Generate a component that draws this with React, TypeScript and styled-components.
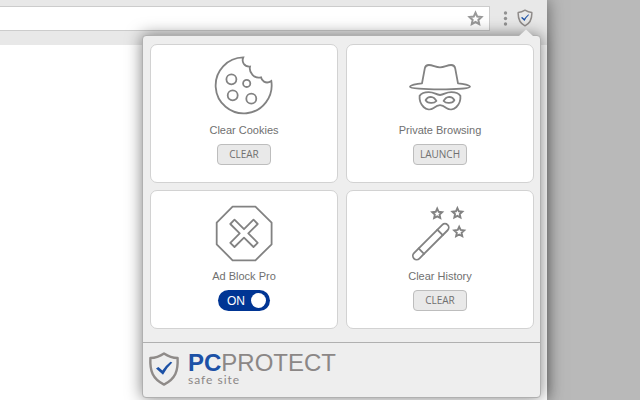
import React, { useState } from "react";
import styled, { createGlobalStyle } from "styled-components";

const GlobalStyle = createGlobalStyle`
  *, *::before, *::after { box-sizing: border-box; }
  body {
    margin: 0;
    background: #b9b9b9;
    font-family: "Liberation Sans", Arial, sans-serif;
    color: #707070;
  }
  button, input { font: inherit; color: inherit; }
`;

const Desktop = styled.div`
  min-height: 100vh;
  display: flex;
  padding-right: 93px;
  overflow: hidden;
`;

const Browser = styled.div`
  position: relative;
  flex: 1;
  background: #fff;
  box-shadow: 0 0 16px rgba(0, 0, 0, 0.5);
`;

const Toolbar = styled.header`
  display: flex;
  align-items: center;
  height: 45px;
  padding: 0 14px 9px 0;
  background: #e8e8e8;
`;

const AddressBar = styled.form`
  flex: 1;
  display: flex;
  align-items: center;
  height: 25px;
  margin-right: 9px;
  padding-right: 5px;
  background: #fff;
  border: solid #ccc;
  border-width: 1px 1px 1px 0;
`;

const AddressInput = styled.input`
  flex: 1;
  min-width: 0;
  border: 0;
  outline: 0;
  padding: 0 8px;
  background: transparent;
  font-size: 12px;
`;

const IconButton = styled.button<{ $gap?: number }>`
  display: flex;
  padding: 0;
  margin-left: ${(p) => p.$gap ?? 0}px;
  border: 0;
  background: transparent;
  cursor: pointer;
`;

const Popup = styled.section`
  position: absolute;
  top: 35px;
  right: 6px;
  width: 399px;
  background: #eee;
  border: 1px solid #b0b0b0;
  border-radius: 4px;
  box-shadow: 0 0 16px rgba(0, 0, 0, 0.5);
`;

const Pointer = styled.svg`
  position: absolute;
  top: -7px;
  right: 7px;
  display: block;
`;

const CardGrid = styled.div`
  display: grid;
  grid-template-columns: 1fr 1fr;
  gap: 7px 8px;
  padding: 8px 6px 13px 7px;
`;

const Card = styled.article`
  display: flex;
  flex-direction: column;
  align-items: center;
  padding: 9px 0 17px;
  background: #fff;
  border: 1px solid #d2d2d2;
  border-radius: 7px;
`;

const Title = styled.h2`
  margin: 4px 0 6px;
  font-size: 11px;
  line-height: 16px;
  font-weight: 400;
`;

const ActionButton = styled.button`
  width: 54px;
  height: 21px;
  padding: 0;
  border: 1px solid #bdbdbd;
  border-radius: 4px;
  background: #e9e9e9;
  font-family: "Open Sans", sans-serif;
  font-size: 10px;
  line-height: 19px;
  cursor: pointer;
`;

const Switch = styled.label<{ $on: boolean }>`
  display: flex;
  flex-direction: ${(p) => (p.$on ? "row" : "row-reverse")};
  align-items: center;
  justify-content: space-between;
  width: 52px;
  height: 21px;
  padding: ${(p) => (p.$on ? "0 4px 0 9px" : "0 9px 0 4px")};
  border-radius: 11px;
  background: ${(p) => (p.$on ? "#003594" : "#8c8c8c")};
  color: #fff;
  font-size: 12px;
  cursor: pointer;
`;

const SwitchInput = styled.input`
  appearance: none;
  width: 15px;
  height: 15px;
  margin: 0;
  border-radius: 50%;
  background: #fff;
  cursor: pointer;
`;

const Footer = styled.footer`
  display: flex;
  align-items: flex-start;
  gap: 8px;
  padding: 8px 5px 10px;
  border-top: 1px solid #b0b0b0;
`;

const Brand = styled.div`
  display: flex;
  flex-direction: column;
`;

const BrandName = styled.span`
  font-size: 24px;
  line-height: 24px;
  color: #8b8786;
`;

const BrandStrong = styled.b`
  color: #1c51a6;
`;

const Tagline = styled.span`
  font-family: Lato, sans-serif;
  font-size: 12px;
  line-height: 9px;
  letter-spacing: 1px;
  color: #8b8786;
`;

const LineArt = styled.svg`
  display: block;
  width: 64px;
  height: 64px;
  fill: none;
  stroke: #828282;
  stroke-width: 1.8;
  stroke-linejoin: round;
  stroke-linecap: round;
`;

const starPoints = (cx: number, cy: number, r: number) =>
  Array.from({ length: 10 }, (_, i) => {
    const a = -Math.PI / 2 + (i * Math.PI) / 5;
    const d = i % 2 ? r * 0.48 : r;
    return `${(cx + d * Math.cos(a)).toFixed(2)},${(cy + d * Math.sin(a)).toFixed(2)}`;
  }).join(" ");

const CookieIcon = () => (
  <LineArt viewBox="0 0 64 64" aria-hidden>
    <path d="M31.3 3.4A28 28 0 1 0 59.3 27Q55.5 29.6 52 27.6Q49.6 26.2 49 23.3Q44 24.6 40.5 20.8Q37 17.3 38 12.6Q34 13 31.7 9.8Q29.8 6.8 31.3 3.4Z" strokeLinejoin="miter" />
    <circle cx="19.4" cy="25.3" r="5" />
    <circle cx="34.7" cy="29.4" r="3.6" />
    <circle cx="20.7" cy="41.3" r="5" />
    <circle cx="39.3" cy="44.7" r="5" />
  </LineArt>
);

const IncognitoIcon = () => (
  <LineArt viewBox="0 0 64 64" aria-hidden>
    <path d="M14 29.300L16.800 14.400Q17.500 11 20.800 11C25 11 27.400 13.300 32 13.300S39 11 43.200 11Q46.500 11 47.200 14.400L50 29.300C55.600 29.700 62 31.400 62 32.800C62 34.400 48 35.400 32 35.400S2 34.400 2 32.800C2 31.400 8.400 29.700 14 29.300Z" />
    <path d="M32 41C27.500 40.600 26.500 38.200 20.600 38.200C16.400 38.200 12.900 40.100 11.600 41.900C11.200 46.600 12.900 50.300 15.600 53C18.300 55.700 22.400 56.200 25.600 54C28.300 52 29.500 51.200 32 51.200S35.700 52 38.400 54C41.600 56.200 45.700 55.700 48.400 53C51.100 50.300 52.800 46.600 52.400 41.900C51.100 40.100 47.600 38.200 43.400 38.200C37.500 38.200 36.500 40.600 32 41Z" />
    <path d="M17.600 46.200Q19.200 42.900 22.800 42.900Q26.400 43.200 28.400 47Q26.400 49.200 22.800 48.900Q19 48.900 17.600 46.200ZM46.400 46.200Q44.800 42.900 41.200 42.900Q37.600 43.200 35.600 47Q37.600 49.200 41.200 48.900Q45 48.900 46.400 46.200Z" />
  </LineArt>
);

const AdBlockIcon = () => (
  <LineArt viewBox="0 0 64 64" aria-hidden>
    <path d="M20.600 6.700H43.400L59.600 22.600V44.400L43.400 60.300H20.600L4.700 44.400V22.600Z" />
    <path d="M22.500 19.700L32 29.200L41.500 19.700L45.700 24L36.300 33.400L45.700 42.800L41.500 47L32 37.600L22.500 47L18.300 42.800L27.700 33.400L18.300 24Z" />
  </LineArt>
);

const WandIcon = () => (
  <LineArt viewBox="0 0 64 64" aria-hidden>
    <g transform="rotate(-45 22.800 41.700)">
      <rect x="-1" y="37.900" width="47.600" height="7.600" rx="3.800" />
      <path d="M9.400 37.900V45.500M35.900 37.900V45.500" />
    </g>
    <g strokeWidth="1.9" strokeLinejoin="miter">
      <polygon points={starPoints(29.2, 13.8, 5.2)} />
      <polygon points={starPoints(49.4, 13.3, 5.2)} />
      <polygon points={starPoints(51.2, 32, 5.2)} />
    </g>
  </LineArt>
);

const ShieldIcon = ({ width, height, stroke }: { width: number; height: number; stroke: number }) => (
  <svg width={width} height={height} viewBox="0 0 32 36" aria-hidden>
    <path
      d="M16 2.400Q22.500 6.700 29.600 7C30.200 20 27.500 28 16 33.600C4.500 28 1.800 20 2.400 7Q9.500 6.700 16 2.400Z"
      fill="none"
      stroke="#8f8b89"
      strokeWidth={stroke}
      strokeLinejoin="round"
    />
    <path d="M8 17.500L10.400 16L14.400 19.400Q18.200 14.200 22.500 10.800L24.300 11.600Q18.400 17.200 15 23.800Z" fill="#1c51a6" />
  </svg>
);

const AdBlockSwitch = () => {
  const [on, setOn] = useState(true);
  return (
    <Switch $on={on}>
      {on ? "ON" : "OFF"}
      <SwitchInput type="checkbox" role="switch" checked={on} onChange={(e) => setOn(e.target.checked)} />
    </Switch>
  );
};

const features = [
  { title: "Clear Cookies", icon: <CookieIcon />, action: "CLEAR" },
  { title: "Private Browsing", icon: <IncognitoIcon />, action: "LAUNCH" },
  { title: "Ad Block Pro", icon: <AdBlockIcon />, action: null },
  { title: "Clear History", icon: <WandIcon />, action: "CLEAR" },
];

export default function App() {
  return (
    <Desktop>
      <GlobalStyle />
      <Browser>
        <Toolbar>
          <AddressBar onSubmit={(e) => e.preventDefault()}>
            <AddressInput type="text" aria-label="Address" />
            <IconButton type="button" aria-label="Bookmark">
              <svg width="17" height="17" viewBox="0 0 17 17">
                <polygon points={starPoints(8.5, 9, 6.3)} fill="none" stroke="#999" strokeWidth="2" />
              </svg>
            </IconButton>
          </AddressBar>
          <IconButton type="button" aria-label="Menu">
            <svg width="12" height="17" viewBox="0 0 12 17" fill="#929292">
              <circle cx="6.500" cy="3" r="1.700" />
              <circle cx="6.500" cy="8.500" r="1.700" />
              <circle cx="6.500" cy="14" r="1.700" />
            </svg>
          </IconButton>
          <IconButton type="button" aria-label="PC Protect" $gap={6}>
            <ShieldIcon width={16} height={18} stroke={3} />
          </IconButton>
        </Toolbar>
        <Popup aria-label="PC Protect">
          <Pointer width="14" height="8" viewBox="0 0 14 8" aria-hidden>
            <path d="M0 8V7L7 0.500L14 7V8Z" fill="#eee" />
          </Pointer>
          <CardGrid>
            {features.map(({ title, icon, action }) => (
              <Card key={title}>
                {icon}
                <Title>{title}</Title>
                {action ? <ActionButton type="button">{action}</ActionButton> : <AdBlockSwitch />}
              </Card>
            ))}
          </CardGrid>
          <Footer>
            <ShieldIcon width={32} height={36} stroke={2.4} />
            <Brand>
              <BrandName>
                <BrandStrong>PC</BrandStrong>PROTECT
              </BrandName>
              <Tagline>safe site</Tagline>
            </Brand>
          </Footer>
        </Popup>
      </Browser>
    </Desktop>
  );
}
